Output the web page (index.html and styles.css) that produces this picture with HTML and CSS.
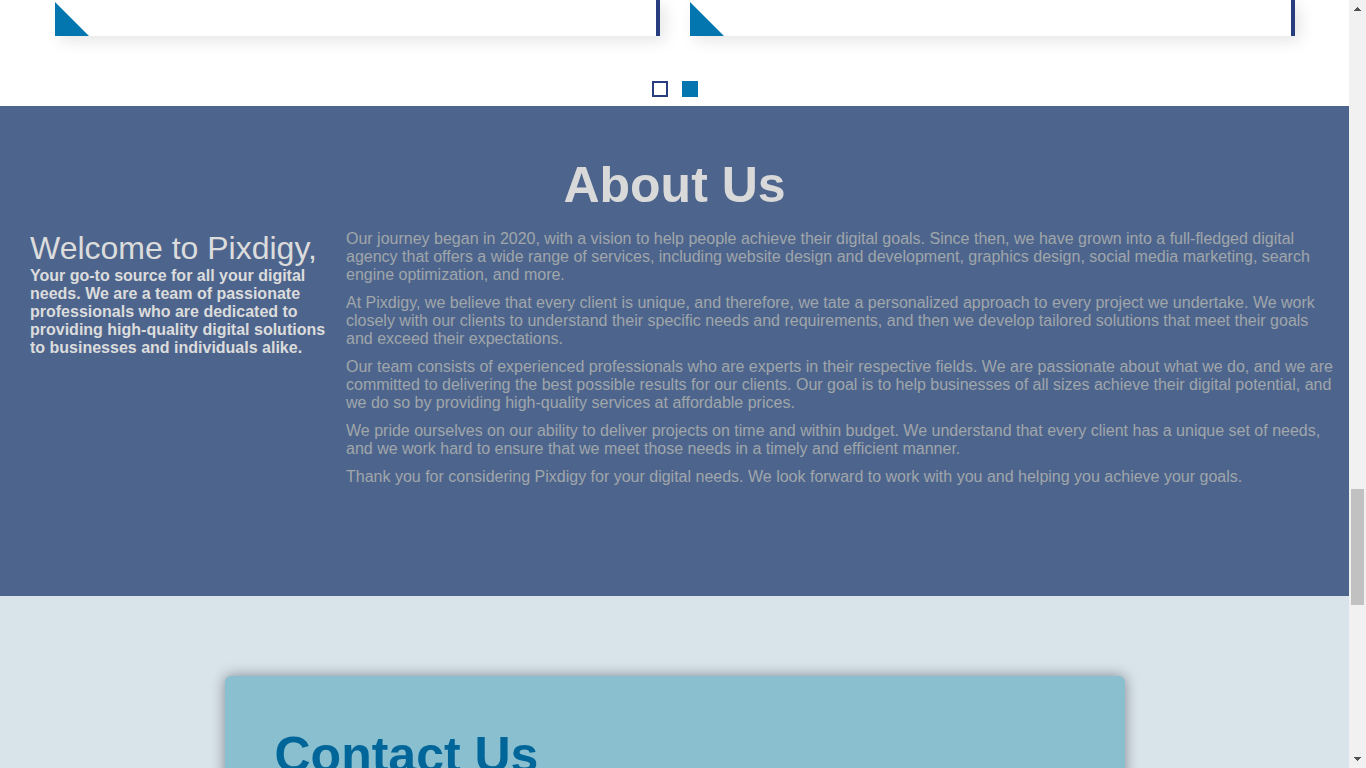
FILE: index.html
```html
<!DOCTYPE html>
<html lang="en">
<head>
<meta charset="utf-8">
<title>Pixdigy</title>
<link rel="stylesheet" href="styles.css">
</head>
<body>
<div class="window">
  <main class="page">
    <section class="slider">
      <div class="slides">
        <article class="slide"><span class="slide-corner"></span></article>
        <article class="slide"><span class="slide-corner"></span></article>
      </div>
      <div class="pagination">
        <button class="bullet" type="button" aria-label="Go to slide 1"></button>
        <button class="bullet bullet-active" type="button" aria-label="Go to slide 2"></button>
      </div>
    </section>
    <section class="about">
      <h1 class="about-title">About Us</h1>
      <div class="about-columns">
        <div class="about-intro">
          <h2 class="about-welcome">Welcome to Pixdigy,</h2>
          <h4 class="about-lead">Your go-to source for all your digital needs. We are a team of passionate professionals who are dedicated to providing high-quality digital solutions to businesses and individuals alike.</h4>
        </div>
        <div class="about-story">
          <p>Our journey began in 2020, with a vision to help people achieve their digital goals. Since then, we have grown into a full-fledged digital agency that offers a wide range of services, including website design and development, graphics design, social media marketing, search engine optimization, and more.</p>
          <p>At Pixdigy, we believe that every client is unique, and therefore, we tate a personalized approach to every project we undertake. We work closely with our clients to understand their specific needs and requirements, and then we develop tailored solutions that meet their goals and exceed their expectations.</p>
          <p>Our team consists of experienced professionals who are experts in their respective fields. We are passionate about what we do, and we are committed to delivering the best possible results for our clients. Our goal is to help businesses of all sizes achieve their digital potential, and we do so by providing high-quality services at affordable prices.</p>
          <p>We pride ourselves on our ability to deliver projects on time and within budget. We understand that every client has a unique set of needs, and we work hard to ensure that we meet those needs in a timely and efficient manner.</p>
          <p>Thank you for considering Pixdigy for your digital needs. We look forward to work with you and helping you achieve your goals.</p>
        </div>
      </div>
    </section>
    <section class="contact">
      <div class="contact-card">
        <h1 class="contact-title">Contact Us</h1>
      </div>
    </section>
  </main>
  <div class="scrollbar" aria-hidden="true">
    <svg class="scroll-arrow" width="17" height="17" viewBox="0 0 17 17" shape-rendering="crispEdges"><path fill="#505050" d="M8 7h1v1h1v1h1v1h1v1H5v-1h1V9h1V8h1z"/></svg>
    <div class="scroll-track"><div class="scroll-thumb"></div></div>
    <svg class="scroll-arrow" width="17" height="17" viewBox="0 0 17 17" shape-rendering="crispEdges"><path fill="#505050" d="M5 6h7v1h-1v1h-1v1H9v1H8V9H7V8H6V7H5z"/></svg>
  </div>
</div>
</body>
</html>
```

FILE: styles.css
```css
* {
  box-sizing: border-box;
  margin: 0;
  padding: 0;
}

body {
  font-family: "Liberation Sans", Arial, sans-serif;
  font-size: 16px;
  line-height: 18px;
  background: #fff;
}

.window {
  display: flex;
  height: 100vh;
  overflow: hidden;
}

.page {
  flex: 1;
  min-width: 0;
}

/* Slider */
.slider {
  padding: 0 54px 9px 55px;
}

.slides {
  display: grid;
  grid-template-columns: 1fr 1fr;
  gap: 30px;
}

.slide {
  display: flex;
  padding-top: 2px;
  border-right: 4px solid #283c80;
  background: #fff;
  box-shadow: 5px 5px 15px rgba(0, 0, 0, 0.1);
}

.slide-corner {
  width: 34px;
  height: 34px;
  background: #0476af;
  clip-path: polygon(0 0, 100% 100%, 0 100%);
}

.pagination {
  display: flex;
  justify-content: center;
  gap: 14px;
  margin-top: 45px;
}

.bullet {
  width: 16px;
  height: 16px;
  border: 2px solid #283c80;
  background: #fff;
}

.bullet-active {
  border-color: #0476af;
  background: #0476af;
}

/* About */
.about {
  padding: 50px 10px 100px 30px;
  background: #4d658d;
}

.about-title {
  font-size: 50px;
  line-height: 58px;
  margin: 0 0 16px -20px;
  text-align: center;
  color: #d9d9d9;
}

.about-columns {
  display: grid;
  grid-template-columns: 300px 1fr;
  gap: 16px;
}

.about-intro {
  color: #dcdcdc;
}

.about-welcome {
  font-size: 32px;
  font-weight: 400;
  line-height: 37px;
}

.about-lead {
  font-size: 16px;
}

.about-story {
  color: #a0a6aa;
}

.about-story p {
  margin-bottom: 10px;
}

/* Contact */
.contact {
  padding: 80px 20px;
  background: #d8e3ea;
}

.contact-card {
  max-width: 900px;
  min-height: 400px;
  margin: 0 auto;
  padding: 50px;
  border-radius: 6px;
  background: #89bfcf;
  box-shadow: 0 0 14px rgba(0, 0, 0, 0.4);
}

.contact-title {
  font-size: 50px;
  line-height: 58px;
  color: #006699;
}

/* Scrollbar */
.scrollbar {
  display: flex;
  flex-direction: column;
  flex: 0 0 17px;
  background: #f1f1f1;
}

.scroll-arrow {
  display: block;
}

.scroll-track {
  display: flex;
  flex-direction: column;
  flex: 1;
  padding: 0 2px;
}

.scroll-track::before {
  content: "";
  flex: 472;
}

.scroll-track::after {
  content: "";
  flex: 146;
}

.scroll-thumb {
  flex: 116;
  background: #c1c1c1;
}
```
